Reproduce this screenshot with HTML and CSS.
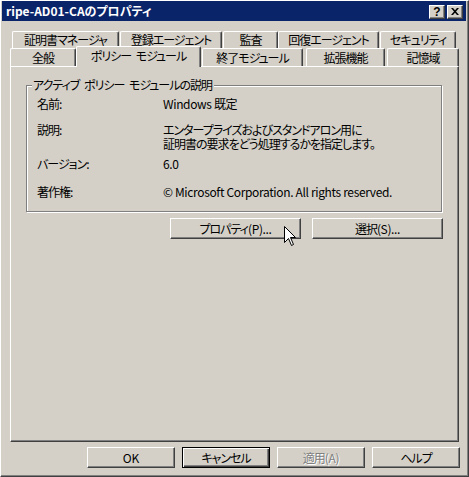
FILE: index.html
```html
<!DOCTYPE html>
<html lang="ja">
<head>
<meta charset="utf-8">
<link rel="stylesheet" href="styles.css">
</head>
<body>
<div class="window">
  <div class="titlebar">
    <span class="title">ripe-AD01-CAのプロパティ</span>
    <div class="caption-btns">
      <span class="cbtn cbtn-help">?</span>
      <span class="cbtn cbtn-close"><svg width="8" height="7" viewBox="0 0 8 7"><path d="M0 0h2l2 2.3L6 0h2L5 3.5 8 7H6L4 4.7 2 7H0l3-3.5z" fill="#000"/></svg></span>
    </div>
  </div>
  <div class="content">
    <div class="tabs">
      <div class="tabrow row1">
        <div class="tab tab-cert">証明書マネージャ</div>
        <div class="tab tab-enroll">登録エージェント</div>
        <div class="tab tab-audit">監査</div>
        <div class="tab tab-recovery">回復エージェント</div>
        <div class="tab tab-security">セキュリティ</div>
      </div>
      <div class="tabrow row2">
        <div class="tab tab-general">全般</div>
        <div class="tab tab-policy selected">ポリシー モジュール</div>
        <div class="tab tab-exit">終了モジュール</div>
        <div class="tab tab-ext">拡張機能</div>
        <div class="tab tab-storage">記憶域</div>
      </div>
    </div>
    <div class="panel">
      <div class="group">
        <span class="legend">アクティブ ポリシー モジュールの説明</span>
        <div class="prop prop-name">
          <span class="label">名前:</span>
          <span class="value latin">Windows 既定</span>
        </div>
        <div class="prop prop-desc">
          <span class="label">説明:</span>
          <span class="value">エンタープライズおよびスタンドアロン用に<br>証明書の要求をどう処理するかを指定します。</span>
        </div>
        <div class="prop prop-ver">
          <span class="label">バージョン:</span>
          <span class="value latin">6.0</span>
        </div>
        <div class="prop prop-copy">
          <span class="label">著作権:</span>
          <span class="value latin">© Microsoft Corporation. All rights reserved.</span>
        </div>
      </div>
      <div class="group-actions">
        <button class="btn btn-wide">プロパティ<span class="latin">(P)...</span></button>
        <button class="btn btn-wide">選択<span class="latin">(S)...</span></button>
      </div>
      <svg class="cursor" width="13" height="21" viewBox="0 0 13 21"><path d="M0.5 0.5 V16.5 L4.5 12.5 L7.5 19.5 L9.5 18.5 L6.5 11.5 H11.5 Z" fill="#fff" stroke="#000" stroke-width="1" stroke-linejoin="miter"/></svg>
    </div>
    <div class="footer">
      <button class="btn latin">OK</button>
      <button class="btn btn-default">キャンセル</button>
      <button class="btn btn-disabled">適用<span class="latin">(A)</span></button>
      <button class="btn">ヘルプ</button>
    </div>
  </div>
</div>
</body>
</html>
```

FILE: styles.css
```css
* { box-sizing: border-box; }
html, body {
  margin: 0;
  padding: 0;
  background: #d4d0c8;
}
body {
  width: 469px;
  height: 477px;
  overflow: hidden;
  font-family: "Noto Sans CJK JP", "Liberation Sans", sans-serif;
  font-size: 12px;
  font-feature-settings: "palt";
  letter-spacing: -1px;
  word-spacing: 3px;
  color: #000;
}
.window {
  width: 469px;
  height: 477px;
  border-top: 1px solid #fff;
  border-left: 1px solid #fff;
  border-right: 1px solid #404040;
  border-bottom: 1px solid #404040;
  box-shadow: inset -1px -1px 0 #808080;
  background: #d4d0c8;
  display: flex;
  flex-direction: column;
}
.titlebar {
  height: 20px;
  margin: 0 2px 0 1px;
  background: #0a246a;
  display: flex;
  align-items: center;
  justify-content: space-between;
  padding: 0 3px 0 4px;
}
.title {
  color: #fff;
  font-weight: bold;
  font-size: 12px;
  line-height: 20px;
  letter-spacing: 0;
  word-spacing: 0;
}
.caption-btns {
  display: flex;
  gap: 2px;
  margin-top: 1px;
}
.cbtn {
  width: 16px;
  height: 14px;
  background: #d4d0c8;
  border-top: 1px solid #fff;
  border-left: 1px solid #fff;
  border-right: 1px solid #404040;
  border-bottom: 1px solid #404040;
  box-shadow: inset -1px -1px 0 #808080;
  display: flex;
  align-items: center;
  justify-content: center;
  font-family: "Liberation Sans", sans-serif;
  font-weight: bold;
  font-size: 12px;
  letter-spacing: 0;
  line-height: 1;
}
.content {
  display: flex;
  flex-direction: column;
  padding: 10px 9px 0 9px;
}
.tabs {
  height: 35px;
  display: flex;
  flex-direction: column;
}
.tabrow {
  display: flex;
}
.row1 {
  height: 17px;
  padding-left: 2px;
}
.row1 .tab {
  line-height: 15px;
}
.row2 {
  height: 18px;
}
.tab {
  height: 100%;
  background: #d4d0c8;
  border-top: 1px solid #fff;
  border-left: 1px solid #fff;
  border-right: 1px solid #404040;
  border-radius: 2px 2px 0 0;
  box-shadow: inset -1px 0 0 #808080;
  text-align: center;
  line-height: 17px;
  white-space: nowrap;
  overflow: hidden;
}
.tab-cert { width: 107px; }
.tab-enroll { width: 102px; margin-left: 1px; }
.tab-audit { width: 55px; margin-left: 1px; }
.tab-recovery { width: 101px; }
.tab-security { width: 76px; margin-left: 1px; }
.tab-general { width: 66px; }
.tab-policy { width: 125px; }
.tab-exit { width: 101px; margin-left: 1px; }
.tab-ext { width: 79px; margin-left: 3px; }
.tab-storage { width: 72px; margin-left: 2px; }
.tab.selected {
  position: relative;
  z-index: 1;
  height: 21px;
  margin-top: -2px;
  line-height: 18px;
}
.panel {
  position: relative;
  width: 449px;
  height: 376px;
  border-top: 1px solid #fff;
  border-left: 1px solid #fff;
  border-right: 1px solid #404040;
  border-bottom: 1px solid #404040;
  box-shadow: inset -1px -1px 0 #808080;
  padding: 18px 15px 0 15px;
}
.group {
  position: relative;
  width: 416px;
  height: 127px;
  border: 1px solid #808080;
  box-shadow: inset 1px 1px 0 #fff, 1px 1px 0 #fff;
  padding: 11px 0 0 10px;
}
.legend {
  position: absolute;
  top: -8px;
  left: 5px;
  padding: 0 2px 0 1px;
  background: #d4d0c8;
  line-height: 14px;
}
.prop {
  display: flex;
  line-height: 13px;
}
.label {
  width: 126px;
  flex: none;
}
.latin { letter-spacing: -0.35px; word-spacing: 0; }
.prop-desc { margin-top: 13px; line-height: 14px; }
.prop-ver { margin-top: 6px; }
.prop-copy { margin-top: 15px; }
.group-actions {
  display: flex;
  justify-content: flex-end;
  gap: 11px;
  margin-top: 6px;
  width: 417px;
}
.btn {
  font-family: inherit;
  font-size: 12px;
  font-feature-settings: "palt";
  letter-spacing: -1px;
  color: #000;
  height: 21px;
  width: 88px;
  padding: 0;
  margin: 0;
  background: #d4d0c8;
  border-top: 1px solid #fff;
  border-left: 1px solid #fff;
  border-right: 1px solid #404040;
  border-bottom: 1px solid #404040;
  box-shadow: inset -1px -1px 0 #808080;
  border-radius: 0;
  line-height: 18px;
}
.btn.latin { letter-spacing: 0; }
.btn-wide { width: 131px; }
.btn-default {
  border: 1px solid #000;
  box-shadow: inset 1px 1px 0 #fff, inset -1px -1px 0 #404040, inset -2px -2px 0 #808080;
}
.btn-disabled {
  color: #808080;
  text-shadow: 1px 1px 0 #fff;
}
.cursor {
  position: absolute;
  left: 273px;
  top: 159px;
}
.footer {
  display: flex;
  justify-content: flex-end;
  gap: 7px;
  margin-top: 5px;
  width: 450px;
}
```
